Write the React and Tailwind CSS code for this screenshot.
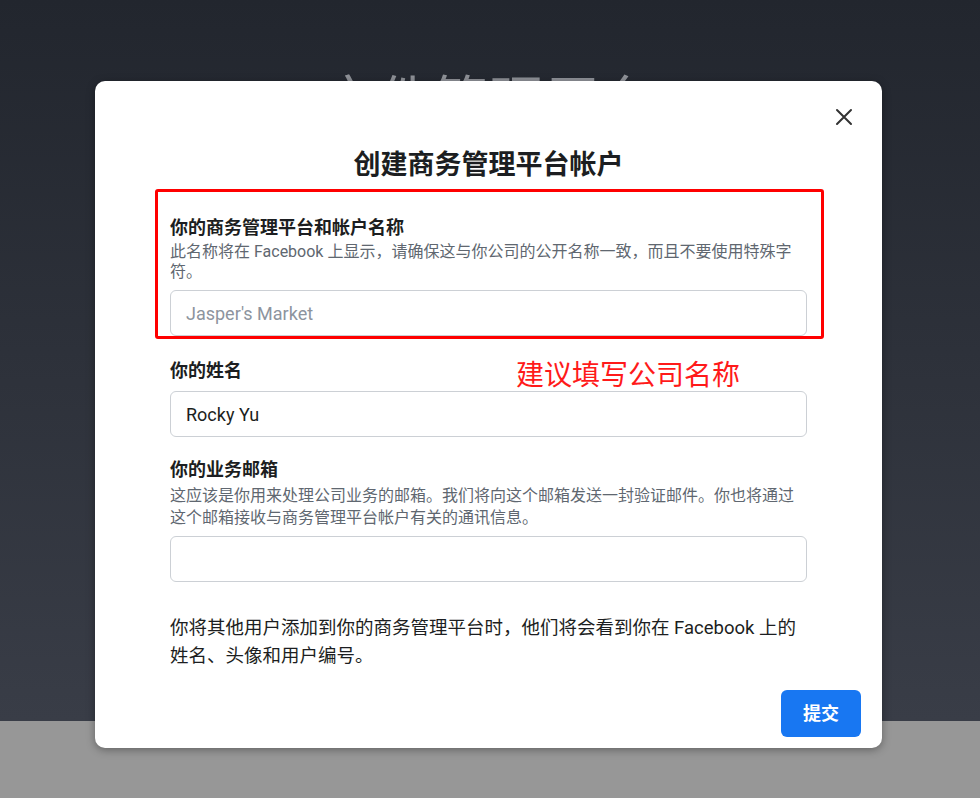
import React from 'react';

const font = { fontFamily: 'Roboto, "Noto Sans CJK SC", sans-serif' };

function Field({ label, hint, hintLeading = 'leading-[20px]', hintGap = 'mt-[2px]', inputGap = 'mt-[8px]', value, placeholder }) {
  return (
    <div>
      <div className="text-[18px] leading-[24px] font-bold text-[#1c1e21]">{label}</div>
      {hint && (
        <div className={`${hintGap} ${hintLeading} text-[16px] text-[#606770]`}>{hint}</div>
      )}
      <div className={`${inputGap} h-[46px] rounded-[6px] border border-[#ccd0d5] px-[15px] flex items-center text-[18px]`}>
        {value ? (
          <span className="text-[#1c1e21]">{value}</span>
        ) : (
          <span className="text-[#8d949e]">{placeholder}</span>
        )}
      </div>
    </div>
  );
}

export default function App() {
  return (
    <div className="relative h-[798px] w-full overflow-hidden" style={font}>
      {/* page behind the dialog */}
      <div className="h-[721px] bg-gradient-to-b from-[#22262e] to-[#393d47] flex flex-col items-center pt-[73px]">
        <div className="text-[54px] leading-[60px] text-[#8e9197] tracking-[2px]">文件管理平台</div>
      </div>
      <div className="h-[77px] bg-[#979797]"></div>

      {/* dialog */}
      <div className="absolute inset-0 pt-[81px] pl-[95px]">
        <div className="relative w-[787px] h-[667px] bg-white rounded-[10px] shadow-[0_2px_8px_rgba(0,0,0,0.35)] px-[21px] pt-[67px]">
          <button className="absolute right-[27px] top-[25px] w-[22px] h-[22px] flex items-center justify-center">
            <svg width="18" height="18" viewBox="0 0 18 18" fill="none">
              <path d="M2 2 L16 16 M16 2 L2 16" stroke="#333" strokeWidth="2" strokeLinecap="round" />
            </svg>
          </button>

          <div className="text-center text-[27px] leading-[34px] font-bold text-[#1c1e21]">创建商务管理平台帐户</div>

          <div className="px-[54px]">
            <div className="mt-[34px]">
              <Field
                label="你的商务管理平台和帐户名称"
                hint="此名称将在 Facebook 上显示，请确保这与你公司的公开名称一致，而且不要使用特殊字符。"
                placeholder="Jasper's Market"
              />
            </div>
            <div className="mt-[23px]">
              <Field label="你的姓名" value="Rocky Yu" />
            </div>
            <div className="mt-[21px]">
              <Field
                label="你的业务邮箱"
                hint="这应该是你用来处理公司业务的邮箱。我们将向这个邮箱发送一封验证邮件。你也将通过这个邮箱接收与商务管理平台帐户有关的通讯信息。"
                hintLeading="leading-[22px]"
                hintGap="mt-[3px]"
                inputGap="mt-[7px]"
              />
            </div>
            <p className="mt-[32px] pr-[10px] text-[18.5px] leading-[28px] text-[#1c1e21]">
              你将其他用户添加到你的商务管理平台时，他们将会看到你在 Facebook 上的姓名、头像和用户编号。
            </p>
          </div>

          <div className="mt-[20px] flex justify-end">
            <button className="w-[80px] h-[47px] rounded-[6px] bg-[#1877f2] text-white text-[18px] font-bold">提交</button>
          </div>

          {/* annotation */}
          <div className="absolute left-[60px] top-[108px] w-[669px] h-[150px] border-[3px] border-[#ff0000] rounded-[3px] pointer-events-none"></div>
          <div className="absolute left-[421px] top-[277px] text-[28px] leading-[36px] text-[#ff1a1a]">建议填写公司名称</div>
        </div>
      </div>
    </div>
  );
}
